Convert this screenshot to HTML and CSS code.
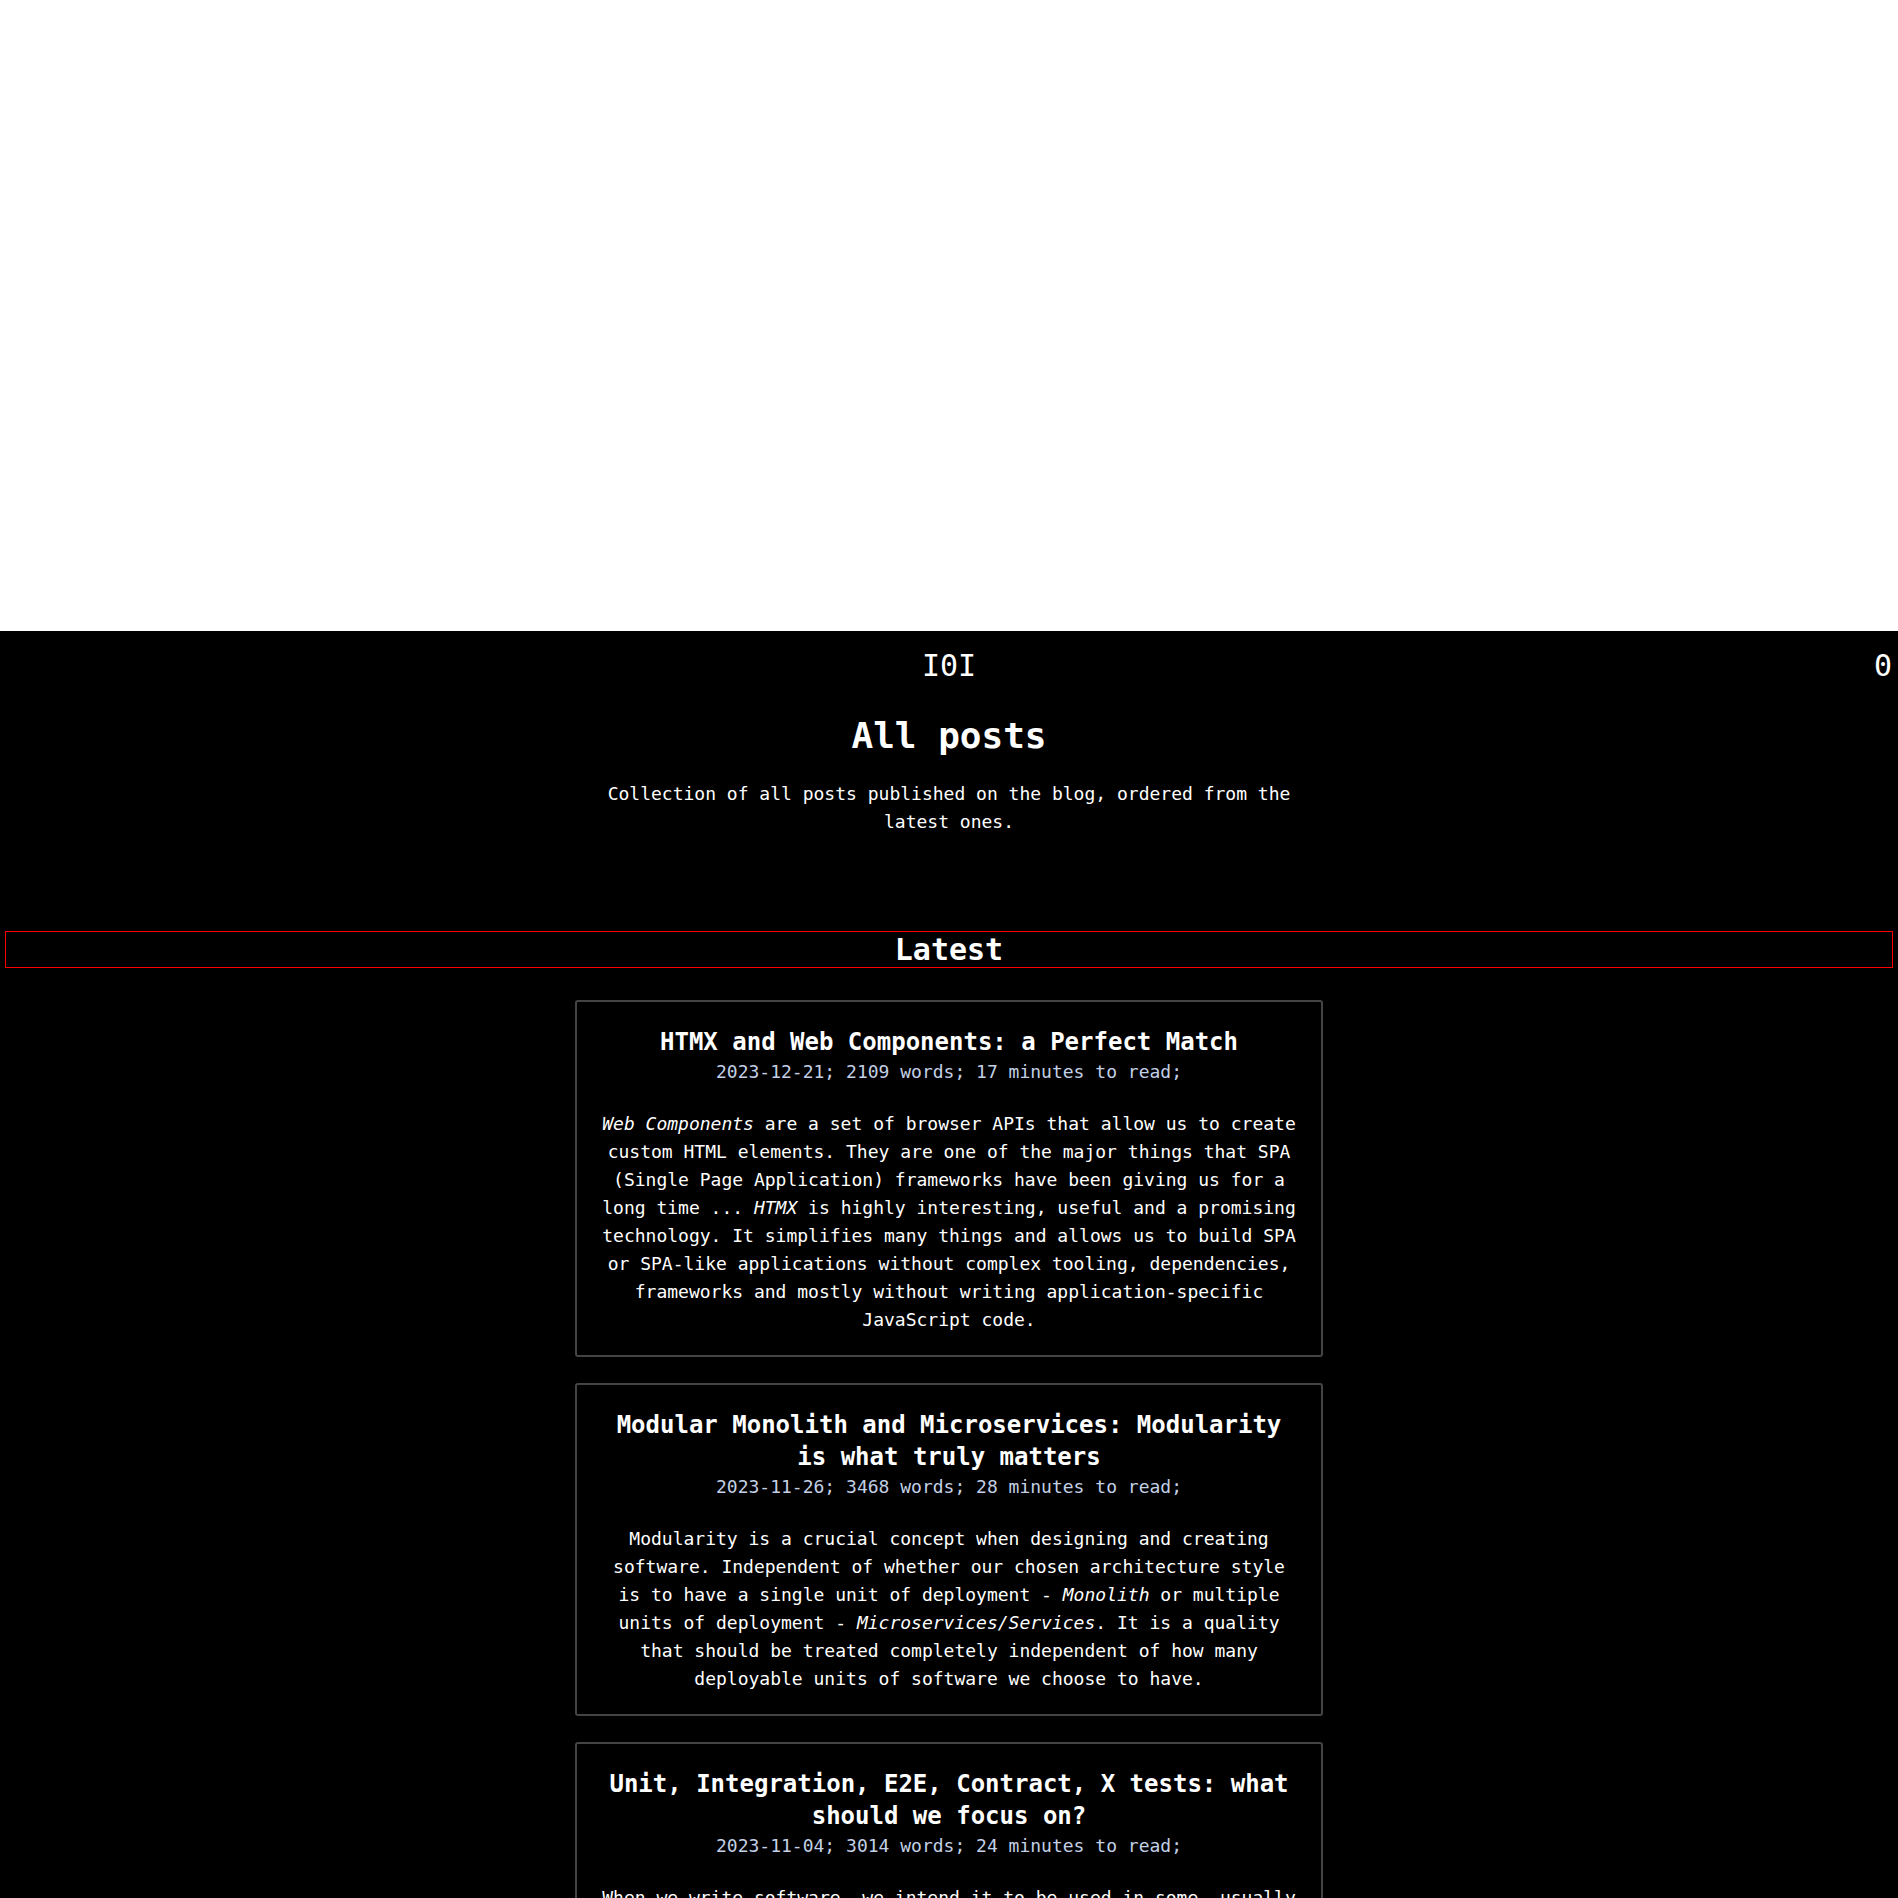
FILE: index.html
```html
<!DOCTYPE html>
<html lang="en">
<head>
<meta charset="utf-8">
<title>All posts</title>
<link rel="stylesheet" href="styles.css">
</head>
<body>
<div class="top-space"></div>
<div class="page">
  <header class="site-header">
    <span class="spacer"></span>
    <a class="logo">I0I</a>
    <span class="counter">0</span>
  </header>
  <h1 class="page-title">All posts</h1>
  <p class="page-desc">Collection of all posts published on the blog, ordered from the latest ones.</p>
  <h2 class="section-title">Latest</h2>
  <div class="posts">
    <article class="post">
      <h3 class="post-title">HTMX and Web Components: a Perfect Match</h3>
      <div class="post-meta">2023-12-21; 2109 words; 17 minutes to read;</div>
      <p class="post-excerpt"><em>Web Components</em> are a set of browser APIs that allow us to create custom HTML elements. They are one of the major things that SPA (Single Page Application) frameworks have been giving us for a long time ... <em>HTMX</em> is highly interesting, useful and a promising technology. It simplifies many things and allows us to build SPA or SPA-like applications without complex tooling, dependencies, frameworks and mostly without writing application-specific JavaScript code.</p>
    </article>
    <article class="post">
      <h3 class="post-title">Modular Monolith and Microservices: Modularity is what truly matters</h3>
      <div class="post-meta">2023-11-26; 3468 words; 28 minutes to read;</div>
      <p class="post-excerpt">Modularity is a crucial concept when designing and creating software. Independent of whether our chosen architecture style is to have a single unit of deployment - <em>Monolith</em> or multiple units of deployment - <em>Microservices/Services</em>. It is a quality that should be treated completely independent of how many deployable units of software we choose to have.</p>
    </article>
    <article class="post">
      <h3 class="post-title">Unit, Integration, E2E, Contract, X tests: what should we focus on?</h3>
      <div class="post-meta">2023-11-04; 3014 words; 24 minutes to read;</div>
      <p class="post-excerpt">When we write software, we intend it to be used in some, usually predefined and desired, way. Tests are what give us confidence that the software works as intended.</p>
    </article>
  </div>
</div>
</body>
</html>
```
FILE: styles.css
```css
html, body {
  margin: 0;
  padding: 0;
  background: #fff;
}

.top-space {
  height: 631px;
  background: #fff;
}

.page {
  background: #000;
  color: #fff;
  font-family: "DejaVu Sans Mono", "Liberation Mono", monospace;
  padding-bottom: 40px;
  min-height: 1300px;
}

.site-header {
  display: grid;
  grid-template-columns: 1fr auto 1fr;
  align-items: center;
  padding-top: 15px;
  font-size: 30px;
  line-height: 40px;
}

.logo {
  color: #fff;
  text-decoration: none;
}

.counter {
  justify-self: end;
  padding-right: 6px;
}

.page-title {
  margin: 28px 0 0;
  font-size: 36px;
  line-height: 44px;
  font-weight: bold;
  text-align: center;
}

.page-desc {
  max-width: 698px;
  margin: 22px auto 0;
  font-size: 18px;
  line-height: 28px;
  text-align: center;
}

.section-title {
  margin: 95px 5px 0;
  border: 1px solid #ff0000;
  font-size: 30px;
  line-height: 35px;
  font-weight: bold;
  text-align: center;
}

.posts {
  display: flex;
  flex-direction: column;
  align-items: center;
  gap: 26px;
  margin-top: 32px;
}

.post {
  box-sizing: border-box;
  width: 748px;
  border: 2px solid #444;
  border-radius: 3px;
  padding: 24px 23px 21px;
  text-align: center;
}

.post-title {
  margin: 0;
  font-size: 24px;
  line-height: 32px;
  font-weight: bold;
}

.post-meta {
  font-size: 18px;
  line-height: 28px;
  color: #c3d0e6;
}

.post-excerpt {
  margin: 24px 0 0;
  font-size: 18px;
  line-height: 28px;
}
```
